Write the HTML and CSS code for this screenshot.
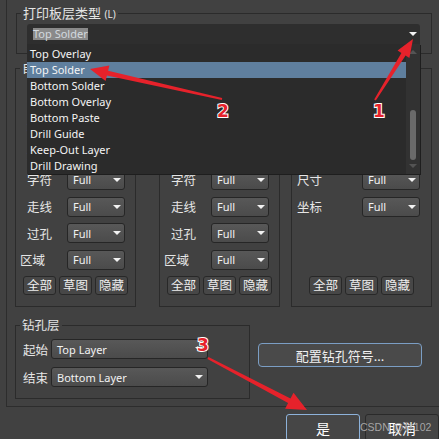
FILE: index.html
```html
<!DOCTYPE html>
<html lang="zh-CN">
<head>
<meta charset="utf-8">
<title>打印板层类型</title>
<link rel="stylesheet" href="styles.css">
</head>
<body>
<div class="panel">
  <fieldset class="group group-type">
    <legend class="big">打印板层类型 <span class="acc">(L)</span></legend>
    <div class="combo-wrap">
      <div class="combo-top"><span class="sel">Top Solder</span><span class="arrow"></span></div>
      <div class="dropdown">
        <ul class="list">
          <li>Top Overlay</li>
          <li class="active">Top Solder</li>
          <li>Bottom Solder</li>
          <li>Bottom Overlay</li>
          <li>Bottom Paste</li>
          <li>Drill Guide</li>
          <li>Keep-Out Layer</li>
          <li>Drill Drawing</li>
        </ul>
        <div class="scrollbar"><span class="sb-up"></span><span class="sb-thumb"></span><span class="sb-down"></span></div>
      </div>
    </div>
  </fieldset>

  <div class="columns">
    <fieldset class="group col">
      <legend>自由图元</legend>
      <div class="rows">
        <div class="row"><label>圆弧</label><div class="combo">Full<span class="arrow"></span></div></div>
        <div class="row"><label>填充</label><div class="combo">Full<span class="arrow"></span></div></div>
        <div class="row"><label>焊盘</label><div class="combo">Full<span class="arrow"></span></div></div>
        <div class="row"><label>字符</label><div class="combo">Full<span class="arrow"></span></div></div>
        <div class="row"><label>走线</label><div class="combo">Full<span class="arrow"></span></div></div>
        <div class="row"><label>过孔</label><div class="combo">Full<span class="arrow"></span></div></div>
        <div class="row"><label class="shift">区域</label><div class="combo">Full<span class="arrow"></span></div></div>
      </div>
      <div class="btns"><button>全部</button><button>草图</button><button>隐藏</button></div>
    </fieldset>
    <fieldset class="group col mid">
      <legend>元件图元</legend>
      <div class="rows">
        <div class="row"><label>圆弧</label><div class="combo">Full<span class="arrow"></span></div></div>
        <div class="row"><label>填充</label><div class="combo">Full<span class="arrow"></span></div></div>
        <div class="row"><label>焊盘</label><div class="combo">Full<span class="arrow"></span></div></div>
        <div class="row"><label>字符</label><div class="combo">Full<span class="arrow"></span></div></div>
        <div class="row"><label>走线</label><div class="combo">Full<span class="arrow"></span></div></div>
        <div class="row"><label>过孔</label><div class="combo">Full<span class="arrow"></span></div></div>
        <div class="row"><label class="shift">区域</label><div class="combo">Full<span class="arrow"></span></div></div>
      </div>
      <div class="btns"><button>全部</button><button>草图</button><button>隐藏</button></div>
    </fieldset>
    <fieldset class="group col right">
      <legend>其他</legend>
      <div class="rows">
        <div class="row"><label>标号</label><div class="combo">Full<span class="arrow"></span></div></div>
        <div class="row"><label>注释</label><div class="combo">Full<span class="arrow"></span></div></div>
        <div class="row"><label>多边形</label><div class="combo">Full<span class="arrow"></span></div></div>
        <div class="row"><label>尺寸</label><div class="combo">Full<span class="arrow"></span></div></div>
        <div class="row"><label>坐标</label><div class="combo">Full<span class="arrow"></span></div></div>
      </div>
      <div class="btns"><button>全部</button><button>草图</button><button>隐藏</button></div>
    </fieldset>
  </div>

  <div class="drill-row">
    <fieldset class="group drill">
      <legend>钻孔层</legend>
      <div class="drill-rows">
        <div class="row"><label>起始</label><div class="combo wide">Top Layer<span class="arrow"></span></div></div>
        <div class="row"><label>结束</label><div class="combo wide">Bottom Layer<span class="arrow"></span></div></div>
      </div>
    </fieldset>
    <button class="cfg">配置钻孔符号...</button>
  </div>
</div>

<div class="footer">
  <button class="ok">是</button>
  <button class="cancel">取消</button>
  <span class="wm">CSDN @林102</span>
</div>

<svg class="annot" viewBox="0 0 439 439" xmlns="http://www.w3.org/2000/svg">
  <polygon class="red" points="375.8,100.5 405.6,55.6 409.4,58.0 413,39 397.6,50.6 401.4,53.0 374.2,99.5"/>
  <polygon class="red" points="222.2,98.0 108.1,70.8 109.4,65.4 90,69 105.6,81.0 106.9,75.6 221.8,100.0"/>
  <polygon class="red" points="208.5,357.1 290.5,398.5 293.5,392.7 307,410 285.1,408.7 288.1,402.9 207.5,358.9"/>
  <text class="num" x="379" y="117">1</text>
  <text class="num" x="223" y="117">2</text>
  <text class="num" x="203" y="351">3</text>
</svg>
</body>
</html>
```

FILE: styles.css
```css
* { box-sizing: border-box; }

body {
  margin: 0;
  width: 439px;
  height: 439px;
  overflow: hidden;
  position: relative;
  background: #414141;
  color: #e6e6e6;
  font-family: "Noto Sans", "Noto Sans CJK SC", sans-serif;
  font-size: 11px;
}

button {
  font-family: "Noto Sans", "Noto Sans CJK SC", sans-serif;
  padding: 0;
  cursor: default;
}

.panel {
  margin-left: 6px;
  height: 407px;
  padding-top: 5px;
  border-left: 1px solid #2d2d2d;
  border-bottom: 1px solid #2d2d2d;
}

.group {
  margin: 0;
  min-width: 0;
  border: 1px solid #2b2b2b;
}

legend {
  margin-left: 4px;
  padding: 0 2px;
  line-height: 17px;
  height: 17px;
  font-size: 12.5px;
  color: #e6e6e6;
}

legend.big { font-size: 13px; margin-left: -6px; }
legend .acc { font-size: 10px; }

/* top group */
.group.group-type {
  margin-left: 9px;
  width: 416px;
  padding: 2px 11px 9px 10px;
}

.combo-wrap { position: relative; }

.combo-top {
  height: 20px;
  background: #2e2e2e;
  border-radius: 3px 3px 0 0;
  display: flex;
  align-items: center;
  padding-left: 6px;
}

.sel {
  background: #8a8a8a;
  color: #d3d9df;
  line-height: 12px;
  font-size: 11px;
}

.arrow {
  margin-left: auto;
  width: 0;
  height: 0;
  border-left: 4px solid transparent;
  border-right: 4px solid transparent;
  border-top: 4px solid #f2f2f2;
}

.combo-top .arrow { margin-right: 3px; }

.dropdown {
  position: absolute;
  top: 100%;
  left: 0;
  width: 393px;
  height: 130px;
  background: #2b2b2b;
  display: flex;
  box-shadow: 1px 1px 0 #1e1e1e;
  z-index: 5;
}

.list {
  flex: 1;
  list-style: none;
  margin: 0;
  padding: 2px 0 0;
}

.list li {
  height: 16px;
  line-height: 16px;
  padding-left: 3px;
  color: #f4f4f4;
  font-size: 11px;
}

.list li.active { background: #5f7f9e; }

.scrollbar {
  width: 14px;
  background: #323232;
  display: flex;
  flex-direction: column;
  align-items: center;
}

.sb-up {
  margin-top: 6px;
  width: 0; height: 0;
  border-left: 4px solid transparent;
  border-right: 4px solid transparent;
  border-bottom: 4px solid #545454;
}

.sb-thumb {
  margin-top: 56px;
  width: 6px;
  height: 50px;
  border-radius: 3px;
  background: #6a6a6a;
}

.sb-down {
  margin-top: 4px;
  width: 0; height: 0;
  border-left: 4px solid transparent;
  border-right: 4px solid transparent;
  border-top: 4px solid #545454;
}

/* three columns */
.columns {
  display: flex;
  margin: 6px 0 0 8px;
}

.group.col {
  width: 121px;
  padding: 13px 0 11px;
}

.group.col.mid { margin-left: 23px; }
.group.col.right { margin-left: 11px; width: 141px; }

.rows {
  height: 180px;
  display: flex;
  flex-direction: column;
  gap: 6.67px;
}

.row {
  display: flex;
  align-items: center;
  height: 20px;
}

.row label {
  width: 51px;
  padding-left: 11px;
  font-size: 12.5px;
  color: #e6e6e6;
  white-space: nowrap;
}

.row label.shift { padding-left: 4px; }

.col.right .row label { width: 70px; padding-left: 5px; }

.combo {
  width: 58px;
  height: 20px;
  border: 1px solid #262626;
  border-radius: 3px;
  background: linear-gradient(#585858, #4b4b4b);
  display: flex;
  align-items: center;
  padding: 0 3px 0 5px;
  color: #f2f2f2;
  font-size: 11px;
}

.btns {
  display: flex;
  justify-content: center;
  gap: 3px;
  margin-top: 6px;
}

.btns button {
  width: 33px;
  height: 19px;
  border: 1px solid #282828;
  border-radius: 3px;
  background: #474747;
  color: #eeeeee;
  font-size: 12.5px;
  line-height: 16px;
}

/* drill */
.drill-row {
  display: flex;
  align-items: flex-start;
  margin: 10px 0 0 8px;
}

.group.drill {
  width: 235px;
  padding: 5px 0 11px 0;
}

.drill-rows {
  display: flex;
  flex-direction: column;
  gap: 8px;
}

.drill .row label {
  width: 35px;
  padding-left: 7px;
  font-size: 12.5px;
}

.combo.wide {
  width: 157px;
  padding-left: 5px;
  padding-right: 4px;
}

.cfg {
  margin: 26px 0 0 8px;
  width: 164px;
  height: 24px;
  border: 1px solid #7b9ec4;
  border-radius: 4px;
  background: #4a4a4a;
  color: #f2f2f2;
  font-size: 13px;
}

/* footer */
.footer {
  position: relative;
  display: flex;
  justify-content: flex-end;
  gap: 5px;
  padding-top: 7px;
}

.ok, .cancel {
  width: 74px;
  height: 27px;
  border-radius: 3px;
  color: #ffffff;
  font-size: 14px;
}

.ok {
  border: 1px solid #8db2da;
  background: #464646;
}

.cancel {
  border: 1px solid #2a2a2a;
  background: #454545;
}

.wm {
  position: absolute;
  left: 360px;
  top: 13px;
  line-height: 14px;
  font-family: "Liberation Sans", "Noto Sans CJK SC", sans-serif;
  font-size: 10.5px;
  color: rgba(185, 185, 185, 0.85);
  white-space: nowrap;
}

/* annotations */
.annot {
  position: absolute;
  left: 0;
  top: 0;
  width: 439px;
  height: 439px;
  pointer-events: none;
  z-index: 20;
}

.red { fill: #e6222b; }

.num {
  font-family: "DejaVu Sans", sans-serif;
  font-weight: bold;
  font-size: 17px;
  text-anchor: middle;
  fill: #e6222b;
  stroke: #ffffff;
  stroke-width: 2px;
  paint-order: stroke;
}
```
